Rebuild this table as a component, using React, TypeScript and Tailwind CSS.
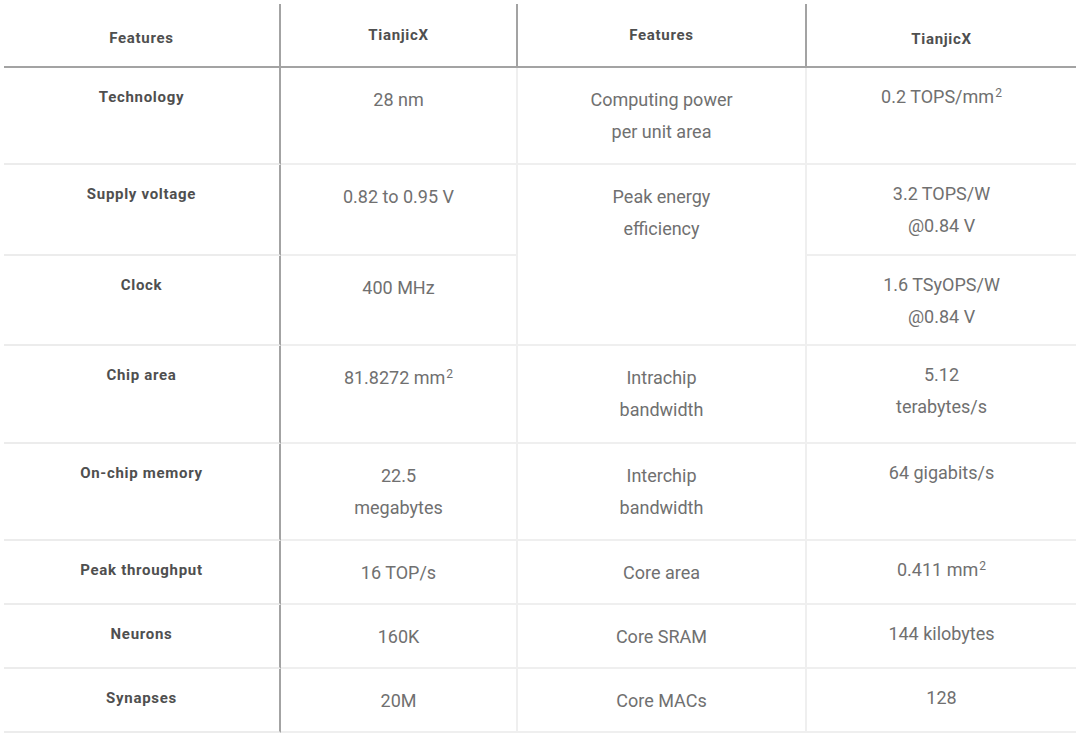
import { Fragment } from "react";

const font = { fontFamily: "Roboto, 'Noto Sans', sans-serif" };

type Row = {
  name: string;
  a: React.ReactNode;
  b?: React.ReactNode;
  c: React.ReactNode;
  span?: boolean;
  skipB?: boolean;
};

const Sq = () => <sup className="text-[12px] relative -top-[6px] ml-[1px]">2</sup>;

const rows: Row[] = [
  { name: "Technology", a: "28 nm", b: <>Computing power<br />per unit area</>, c: <>0.2 TOPS/mm<Sq /></> },
  { name: "Supply voltage", a: "0.82 to 0.95 V", b: <>Peak energy<br />efficiency</>, span: true, c: <>3.2 TOPS/W<br />@0.84 V</> },
  { name: "Clock", a: "400 MHz", skipB: true, c: <>1.6 TSyOPS/W<br />@0.84 V</> },
  { name: "Chip area", a: <>81.8272 mm<Sq /></>, b: <>Intrachip<br />bandwidth</>, c: <>5.12<br />terabytes/s</> },
  { name: "On-chip memory", a: <>22.5<br />megabytes</>, b: <>Interchip<br />bandwidth</>, c: "64 gigabits/s" },
  { name: "Peak throughput", a: "16 TOP/s", b: "Core area", c: <>0.411 mm<Sq /></> },
  { name: "Neurons", a: "160K", b: "Core SRAM", c: "144 kilobytes" },
  { name: "Synapses", a: "20M", b: "Core MACs", c: "128" },
];

export default function App() {
  const head = "flex justify-center border-b-2 border-[#a3a3a3] text-[15px] font-bold tracking-[0.7px] text-[#4f4f4f]";
  const nameCell = "flex justify-center border-r-2 border-b-2 border-r-[#a3a3a3] border-b-[#ececec] pt-[13px] text-[15px] font-bold tracking-[0.7px] leading-[32px] text-[#4f4f4f]";
  const valCell = "text-center border-r-2 border-b-2 border-[#efefef] pt-[16px] text-[18px] leading-[32px] text-[#707070]";
  const lastCell = "text-center border-b-2 border-[#efefef] pt-[13px] text-[18px] leading-[32px] text-[#707070]";

  return (
    <div className="w-[1080px] h-[741px] bg-white pt-[4px] pl-[4px]" style={font}>
      <div className="grid grid-cols-[277px_237px_289px_269px] grid-rows-[64px_97px_91px_90px_98px_97px_64px_64px_64px]">
        <div className={`${head} border-r-2 border-r-[#a3a3a3] items-center pt-[6px]`}>Features</div>
        <div className={`${head} border-r-2 border-r-[#a3a3a3] items-center`}>TianjicX</div>
        <div className={`${head} border-r-2 border-r-[#a3a3a3] items-center`}>Features</div>
        <div className={`${head} items-center pt-[8px]`}>TianjicX</div>

        {rows.map((r) => (
          <Fragment key={r.name}>
            <div className={nameCell}>{r.name}</div>
            <div className={valCell}>{r.a}</div>
            {!r.skipB && (
              <div className={`${valCell} ${r.span ? "row-span-2" : ""}`}>{r.b}</div>
            )}
            <div className={lastCell}>{r.c}</div>
          </Fragment>
        ))}
      </div>
    </div>
  );
}
